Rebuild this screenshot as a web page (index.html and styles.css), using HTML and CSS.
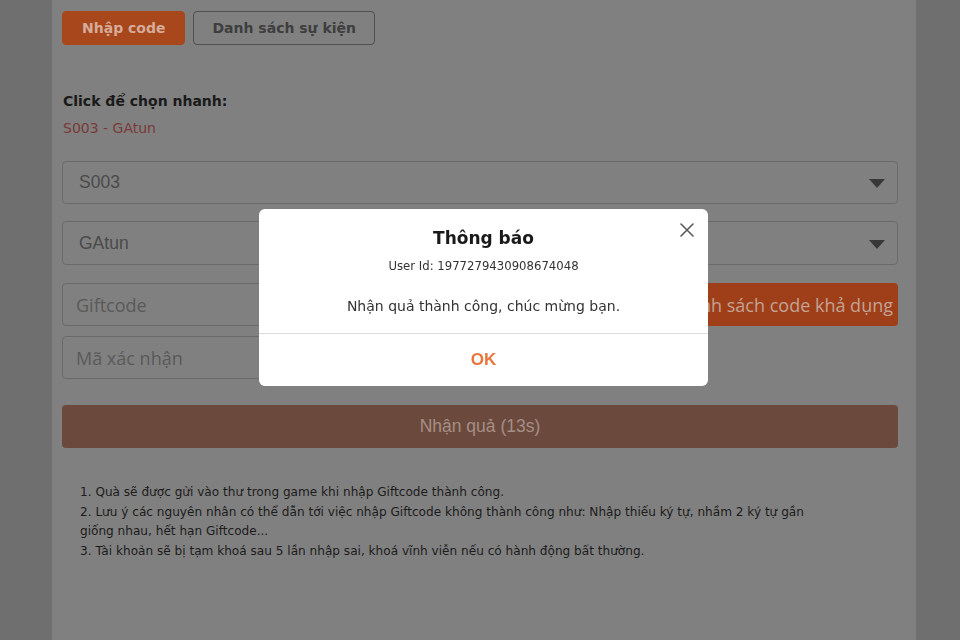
FILE: index.html
```html
<!DOCTYPE html>
<html lang="vi">
<head>
<meta charset="utf-8">
<title>Nhập Giftcode</title>
<link rel="stylesheet" href="styles.css">
</head>
<body>
<div class="page">
  <main class="panel">
    <nav class="tabs">
      <button class="tab tab-active">Nhập code</button>
      <button class="tab">Danh sách sự kiện</button>
    </nav>

    <section class="quick">
      <div class="quick-label">Click để chọn nhanh:</div>
      <a class="quick-item">S003 - GAtun</a>
    </section>

    <div class="field select">
      <span class="value">S003</span>
      <span class="caret"></span>
    </div>
    <div class="field select second">
      <span class="value">GAtun</span>
      <span class="caret"></span>
    </div>

    <div class="row code-row">
      <div class="field input grow"><span class="placeholder">Giftcode</span></div>
      <button class="code-list">Danh sách code khả dụng</button>
    </div>

    <div class="row captcha-row">
      <div class="field input captcha"><span class="placeholder">Mã xác nhận</span></div>
    </div>

    <button class="submit">Nhận quả (13s)</button>

    <div class="notes">
      <p>1. Quà sẽ được gửi vào thư trong game khi nhập Giftcode thành công.</p>
      <p>2. Lưu ý các nguyên nhân có thể dẫn tới việc nhập Giftcode không thành công như: Nhập thiếu ký tự, nhầm 2 ký tự gần giống nhau, hết hạn Giftcode...</p>
      <p>3. Tài khoản sẽ bị tạm khoá sau 5 lần nhập sai, khoá vĩnh viễn nếu có hành động bất thường.</p>
    </div>
  </main>
</div>

<div class="backdrop">
  <div class="dialog" role="dialog">
    <button class="close" aria-label="Đóng">
      <svg viewBox="0 0 14 14" width="14" height="14"><path d="M1 1L13 13M13 1L1 13" stroke="#5a5a5a" stroke-width="1.6" fill="none" stroke-linecap="round"/></svg>
    </button>
    <div class="dialog-body">
      <h2 class="dialog-title">Thông báo</h2>
      <div class="dialog-user">User Id: 1977279430908674048</div>
      <div class="dialog-msg">Nhận quả thành công, chúc mừng bạn.</div>
    </div>
    <div class="dialog-foot">
      <button class="ok">OK</button>
    </div>
  </div>
</div>
</body>
</html>
```

FILE: styles.css
```css
* { box-sizing: border-box; }

html, body {
  margin: 0;
  height: 100%;
}

body {
  background: #6f6f6f;
  font-family: "DejaVu Sans", Verdana, sans-serif;
  overflow: hidden;
}

.page {
  display: flex;
  justify-content: flex-start;
  height: 100%;
  padding-left: 52px;
}

/* page content, shown dimmed under the modal */
.panel {
  width: 864px;
  height: 100%;
  background: #808080;
  padding: 11px 18px 0 10px;
  display: flex;
  flex-direction: column;
}

.tabs {
  display: flex;
  gap: 8px;
}

.tab {
  height: 34px;
  border-radius: 4px;
  border: 1.5px solid #505050;
  background: transparent;
  color: #3e3e3e;
  font-family: "DejaVu Sans", Verdana, sans-serif;
  font-weight: bold;
  font-size: 14px;
  padding: 0 18px;
}

.tab-active {
  background: #a8461c;
  border-color: #a8461c;
  color: #d6ab98;
  padding: 0 19px;
}

.quick {
  margin-top: 46px;
  padding-left: 1px;
}

.quick-label {
  font-weight: bold;
  font-size: 14px;
  line-height: 20px;
  color: #1a1a1a;
}

.quick-item {
  display: block;
  margin-top: 7px;
  font-size: 14px;
  line-height: 20px;
  color: #7a3a3a;
}

.field {
  height: 43px;
  border: 1px solid #6a6a6a;
  border-radius: 4px;
  display: flex;
  align-items: center;
}

.select {
  margin-top: 23px;
  padding: 0 12px 0 16px;
  justify-content: space-between;
}

.select.second {
  margin-top: 17px;
  height: 44px;
}

.select .value {
  font-family: "Liberation Sans", Arial, sans-serif;
  font-size: 17.5px;
  color: #4a4a4a;
}

.caret {
  width: 0;
  height: 0;
  border-left: 8px solid transparent;
  border-right: 8px solid transparent;
  border-top: 9px solid #383838;
  margin-top: 2px;
}

.row {
  display: flex;
  gap: 10px;
}

.code-row { margin-top: 18px; }
.captcha-row { margin-top: 10px; }

.input {
  height: 43px;
  padding-left: 13px;
}

.grow { flex: 1; }

.captcha { width: 420px; }

.placeholder {
  font-family: "Open Sans", sans-serif;
  font-size: 18px;
  color: #5a5a5a;
}

.code-list {
  height: 43px;
  border: none;
  border-radius: 4px;
  background: #9e3f1a;
  color: #c4a293;
  font-family: "Open Sans", sans-serif;
  font-size: 18px;
  padding: 0 5px;
}

.submit {
  margin-top: 26px;
  height: 43px;
  border: none;
  border-radius: 4px;
  background: #6b4a3d;
  color: #a58e86;
  font-family: "Liberation Sans", Arial, sans-serif;
  font-size: 17.5px;
}

.notes {
  margin-top: 35px;
  padding: 0 70px 0 18px;
  color: #1c1c1c;
  font-size: 12.1px;
  line-height: 19.7px;
}

.notes p { margin: 0; }

/* modal */
.backdrop {
  position: fixed;
  inset: 0;
  display: flex;
  justify-content: flex-start;
  align-items: flex-start;
  padding: 209px 0 0 259px;
}

.dialog {
  position: relative;
  width: 449px;
  background: #ffffff;
  border-radius: 6px;
  overflow: hidden;
}

.close {
  position: absolute;
  top: 14px;
  right: 14px;
  width: 14px;
  height: 14px;
  padding: 0;
  border: none;
  background: none;
  display: flex;
}

.dialog-body {
  padding: 17px 20px 17px;
  text-align: center;
  color: #2a2a2a;
}

.dialog-title {
  margin: 0;
  font-size: 17px;
  line-height: 24px;
  font-weight: bold;
  color: #1a1a1a;
}

.dialog-user {
  margin-top: 7px;
  font-size: 11.7px;
  line-height: 18px;
  color: #333;
}

.dialog-msg {
  margin-top: 21px;
  font-size: 14px;
  line-height: 20px;
  color: #333;
}

.dialog-foot {
  border-top: 1px solid #dcdcdc;
  height: 53px;
  display: flex;
  align-items: center;
  justify-content: center;
}

.ok {
  border: none;
  background: none;
  padding: 0;
  font-family: "Liberation Sans", Arial, sans-serif;
  font-weight: bold;
  font-size: 17px;
  color: #e8773d;
}
```
